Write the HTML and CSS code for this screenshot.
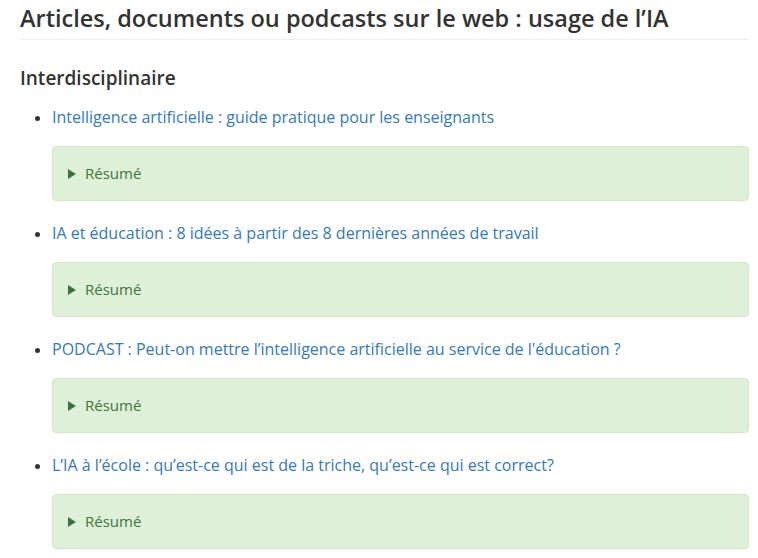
FILE: index.html
```html
<!DOCTYPE html>
<html lang="fr">
<head>
<meta charset="utf-8">
<title>Articles IA</title>
<link rel="stylesheet" href="styles.css">
</head>
<body>
<main class="page">
  <h2 class="title">Articles, documents ou podcasts sur le web : usage de l’IA</h2>
  <h3 class="subtitle">Interdisciplinaire</h3>
  <ul class="list">
    <li class="item">
      <a class="link" href="#">Intelligence artificielle : guide pratique pour les enseignants</a>
      <details class="summary-box"><summary class="summary">Résumé</summary></details>
    </li>
    <li class="item">
      <a class="link" href="#">IA et éducation : 8 idées à partir des 8 dernières années de travail</a>
      <details class="summary-box"><summary class="summary">Résumé</summary></details>
    </li>
    <li class="item">
      <a class="link" href="#">PODCAST : Peut-on mettre l’intelligence artificielle au service de l'éducation ?</a>
      <details class="summary-box"><summary class="summary">Résumé</summary></details>
    </li>
    <li class="item">
      <a class="link" href="#">L’IA à l’école : qu’est-ce qui est de la triche, qu’est-ce qui est correct?</a>
      <details class="summary-box"><summary class="summary">Résumé</summary></details>
    </li>
  </ul>
</main>
</body>
</html>
```
FILE: styles.css
```css
html, body {
  margin: 0;
  padding: 0;
  background: #fff;
}
body {
  font-family: "Open Sans", "Noto Sans", sans-serif;
  color: #333;
  font-size: 15px;
  line-height: 1.42857;
}
.page {
  padding: 0 9px 0 20px;
}
.title {
  margin: 0;
  padding: 3px 0 5px;
  font-size: 23.5px;
  font-weight: 600;
  line-height: 31px;
  border-bottom: 1px solid #eee;
}
.subtitle {
  margin: 24px 0 0;
  font-size: 19px;
  font-weight: 600;
  line-height: 28px;
}
.list {
  margin: 15px 0 0;
  padding-left: 32px;
}
.item {
  margin-bottom: 22px;
  line-height: 21px;
}
.item::marker {
  font-size: 15px;
}
.link {
  color: #337ab7;
  text-decoration: none;
  font-size: 16px;
  line-height: 20px;
}
.summary-box {
  margin-top: 18px;
  background: #dff0d8;
  border: 1px solid #d6e9c6;
  border-radius: 4px;
  color: #3c763d;
  padding: 16px 14px;
}
.summary {
  display: flex;
  align-items: center;
  font-size: 15px;
  line-height: 21px;
  cursor: pointer;
  list-style: none;
}
.summary::-webkit-details-marker {
  display: none;
}
.summary::before {
  content: "";
  width: 0;
  height: 0;
  border-top: 5px solid transparent;
  border-bottom: 5px solid transparent;
  border-left: 8px solid #3c763d;
  margin: 0 9px 0 1px;
}
```
